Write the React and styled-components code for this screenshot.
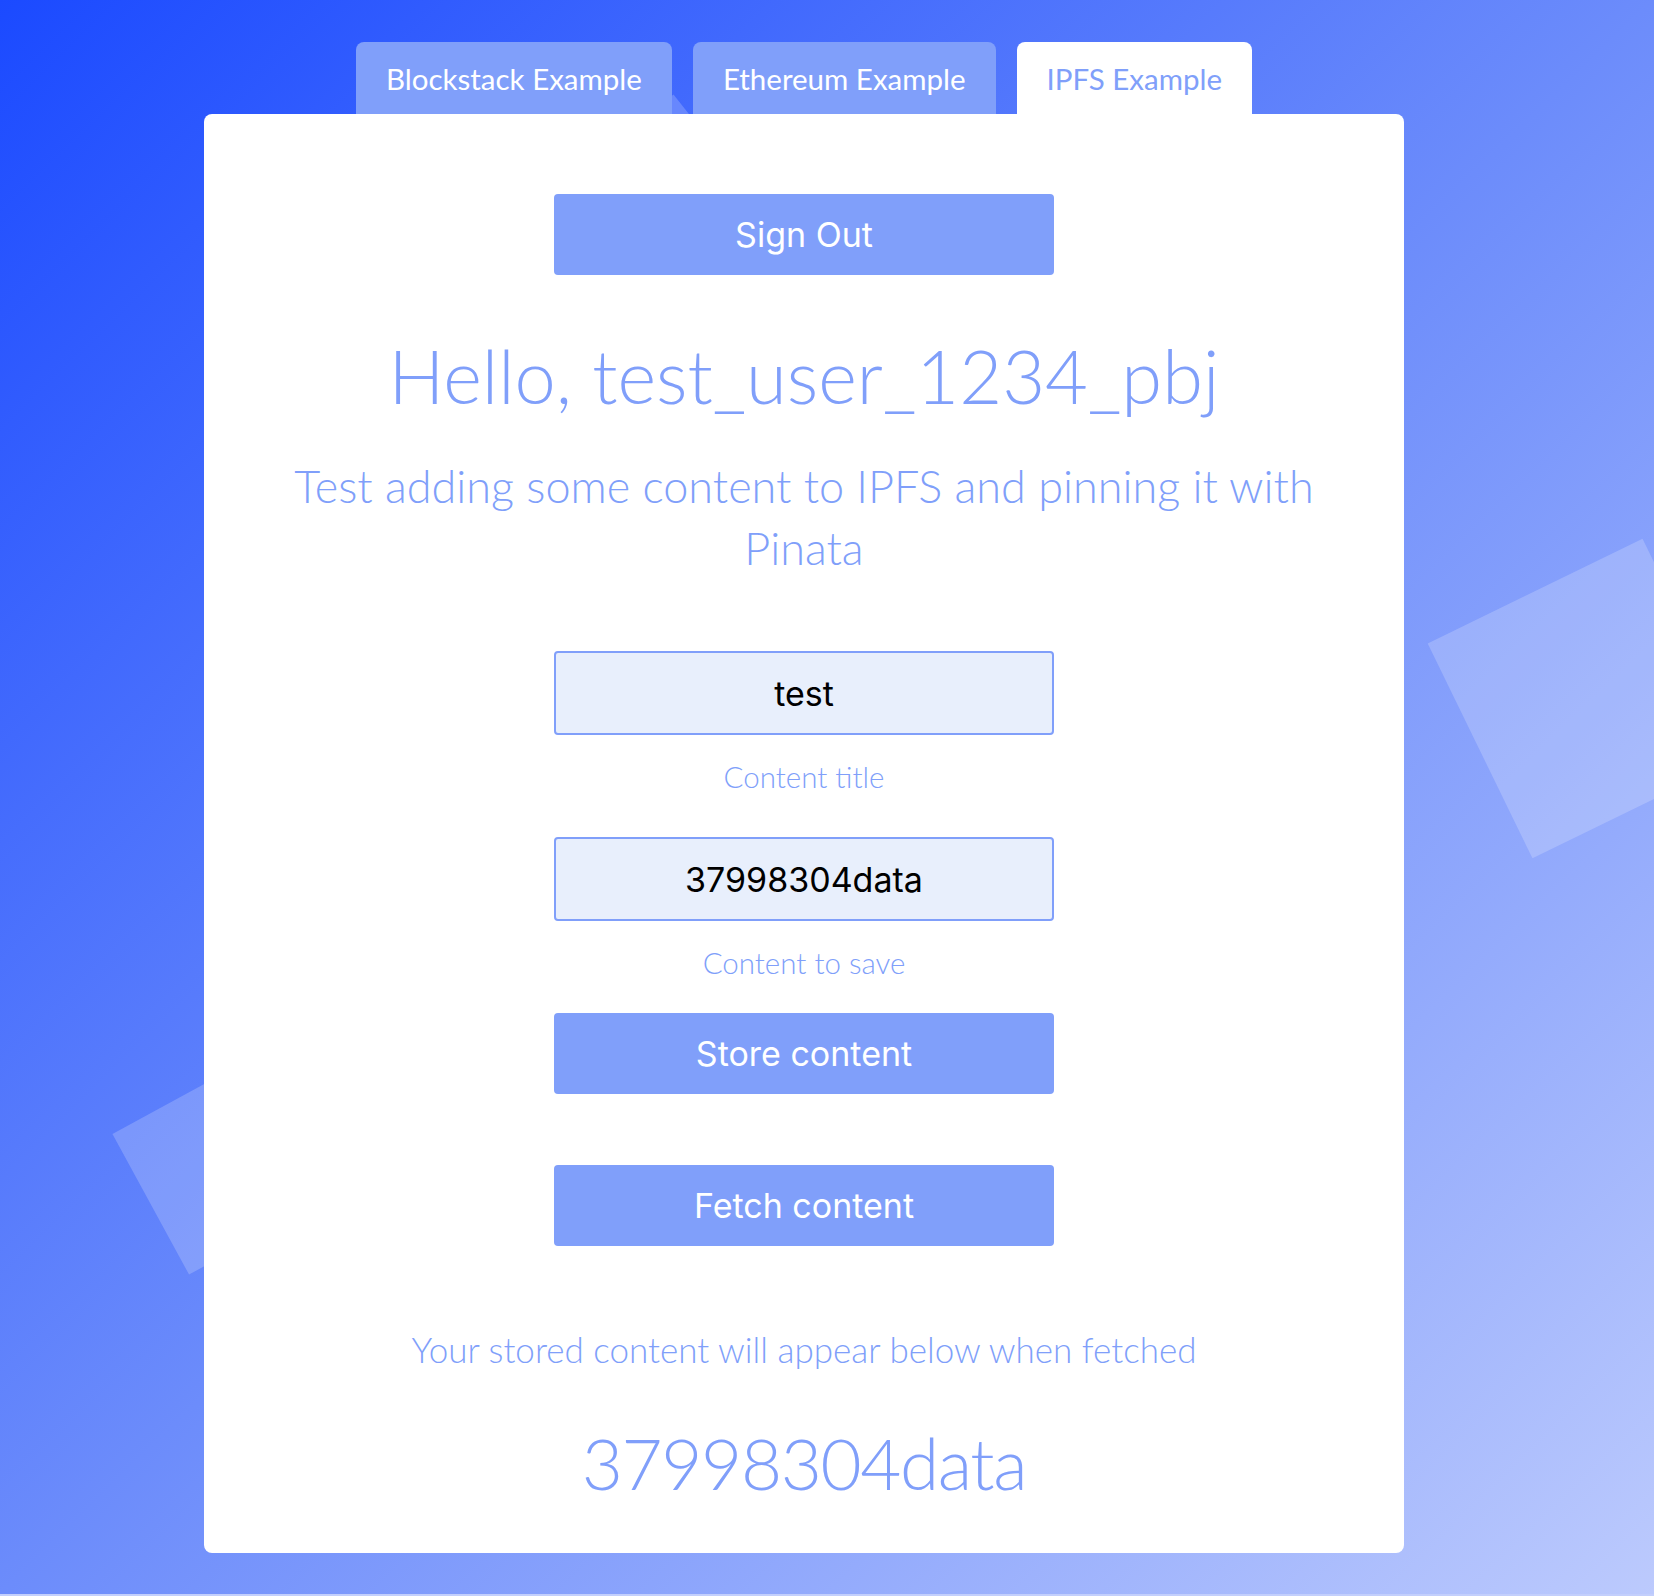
import React, { useState } from "react";
import styled, { createGlobalStyle } from "styled-components";

const accent = "#809ffa";

const GlobalStyle = createGlobalStyle`
  body {
    margin: 0;
    background: #c3cffc;
    font-family: Lato, "Open Sans", sans-serif;
  }
  * {
    box-sizing: border-box;
  }
`;

const Page = styled.div`
  position: relative;
  overflow: hidden;
  min-height: 1594px;
  padding: 42px 250px 0 204px;
  background: linear-gradient(to bottom right, #1b4aff 0%, #6c8cfb 50%, #bccafd 100%);
`;

// decorative squares floating behind the card
const Shape = styled.div`
  position: absolute;
  left: ${(p) => p.$x}px;
  top: ${(p) => p.$y}px;
  width: ${(p) => p.$size}px;
  height: ${(p) => p.$size}px;
  transform: rotate(${(p) => p.$angle}deg);
  background: rgba(255, 255, 255, ${(p) => p.$alpha || 0.2});
`;

const Column = styled.div`
  position: relative;
  z-index: 1;
  width: 1200px;
`;

const TabRow = styled.div`
  display: flex;
  justify-content: center;
  gap: 21px;
`;

const Tab = styled.div`
  height: 72px;
  padding: 0 30px;
  display: flex;
  align-items: center;
  border-radius: 8px 8px 0 0;
  background: ${(p) => (p.$active ? "#ffffff" : accent)};
  color: ${(p) => (p.$active ? accent : "#ffffff")};
  font-family: Lato, sans-serif;
  font-size: 29.5px;
  font-weight: 400;
  cursor: pointer;
`;

const Card = styled.div`
  background: #ffffff;
  border-radius: 8px;
  padding: 80px 0 46px;
  display: flex;
  flex-direction: column;
  align-items: center;
  text-align: center;
`;

const SolidButton = styled.button`
  width: 500px;
  height: 81px;
  margin-top: ${(p) => p.$mt || 0}px;
  border: none;
  border-radius: 4px;
  background: ${accent};
  color: #ffffff;
  font-family: Inter, "Liberation Sans", sans-serif;
  font-size: 34px;
  font-weight: 400;
  cursor: pointer;
`;

const Heading = styled.h1`
  margin: 56px 0 0;
  font-family: Lato, sans-serif;
  font-weight: 300;
  font-size: 74px;
  line-height: 89px;
  color: ${accent};
`;

const Subtitle = styled.p`
  margin: 35px 0 0;
  max-width: 1080px;
  font-family: Lato, sans-serif;
  font-weight: 300;
  font-size: 45px;
  line-height: 62px;
  color: ${accent};
`;

const Field = styled.input`
  width: 500px;
  height: 84px;
  margin-top: ${(p) => p.$mt || 0}px;
  border: 2px solid ${accent};
  border-radius: 4px;
  background: #e8effc;
  text-align: center;
  font-family: Inter, "Liberation Sans", sans-serif;
  font-size: 34px;
  color: #000000;
  outline: none;
`;

const FieldLabel = styled.div`
  margin-top: 25px;
  font-family: Lato, sans-serif;
  font-weight: 300;
  font-size: 29.5px;
  line-height: 34px;
  color: ${accent};
`;

const Hint = styled.div`
  margin-top: 82px;
  font-family: Lato, sans-serif;
  font-weight: 300;
  font-size: 35px;
  line-height: 42px;
  color: ${accent};
`;

const Result = styled.div`
  margin-top: 49px;
  font-family: Lato, sans-serif;
  font-weight: 300;
  font-size: 71px;
  letter-spacing: -1.4px;
  line-height: 88px;
  color: ${accent};
`;

const tabs = ["Blockstack Example", "Ethereum Example", "IPFS Example"];

const App = () => {
  const [active, setActive] = useState(2);
  const [title, setTitle] = useState("test");
  const [content, setContent] = useState("37998304data");

  return (
    <Page>
      <GlobalStyle />
      <Shape $x={1468} $y={579} $size={239} $angle={-26} />
      <Shape $x={141} $y={1086} $size={160} $angle={-28.6} />
      <Shape $x={557} $y={135} $size={200} $angle={51.7} />
      <Column>
        <TabRow>
          {tabs.map((t, i) => (
            <Tab key={t} $active={i === active} onClick={() => setActive(i)}>
              {t}
            </Tab>
          ))}
        </TabRow>
        <Card>
          <SolidButton>Sign Out</SolidButton>
          <Heading>Hello, test_user_1234_pbj</Heading>
          <Subtitle>
            Test adding some content to IPFS and pinning it with Pinata
          </Subtitle>
          <Field
            $mt={72}
            value={title}
            onChange={(e) => setTitle(e.target.value)}
          />
          <FieldLabel>Content title</FieldLabel>
          <Field
            $mt={43}
            value={content}
            onChange={(e) => setContent(e.target.value)}
          />
          <FieldLabel>Content to save</FieldLabel>
          <SolidButton $mt={33}>Store content</SolidButton>
          <SolidButton $mt={71}>Fetch content</SolidButton>
          <Hint>Your stored content will appear below when fetched</Hint>
          <Result>37998304data</Result>
        </Card>
      </Column>
    </Page>
  );
};

export default App;
